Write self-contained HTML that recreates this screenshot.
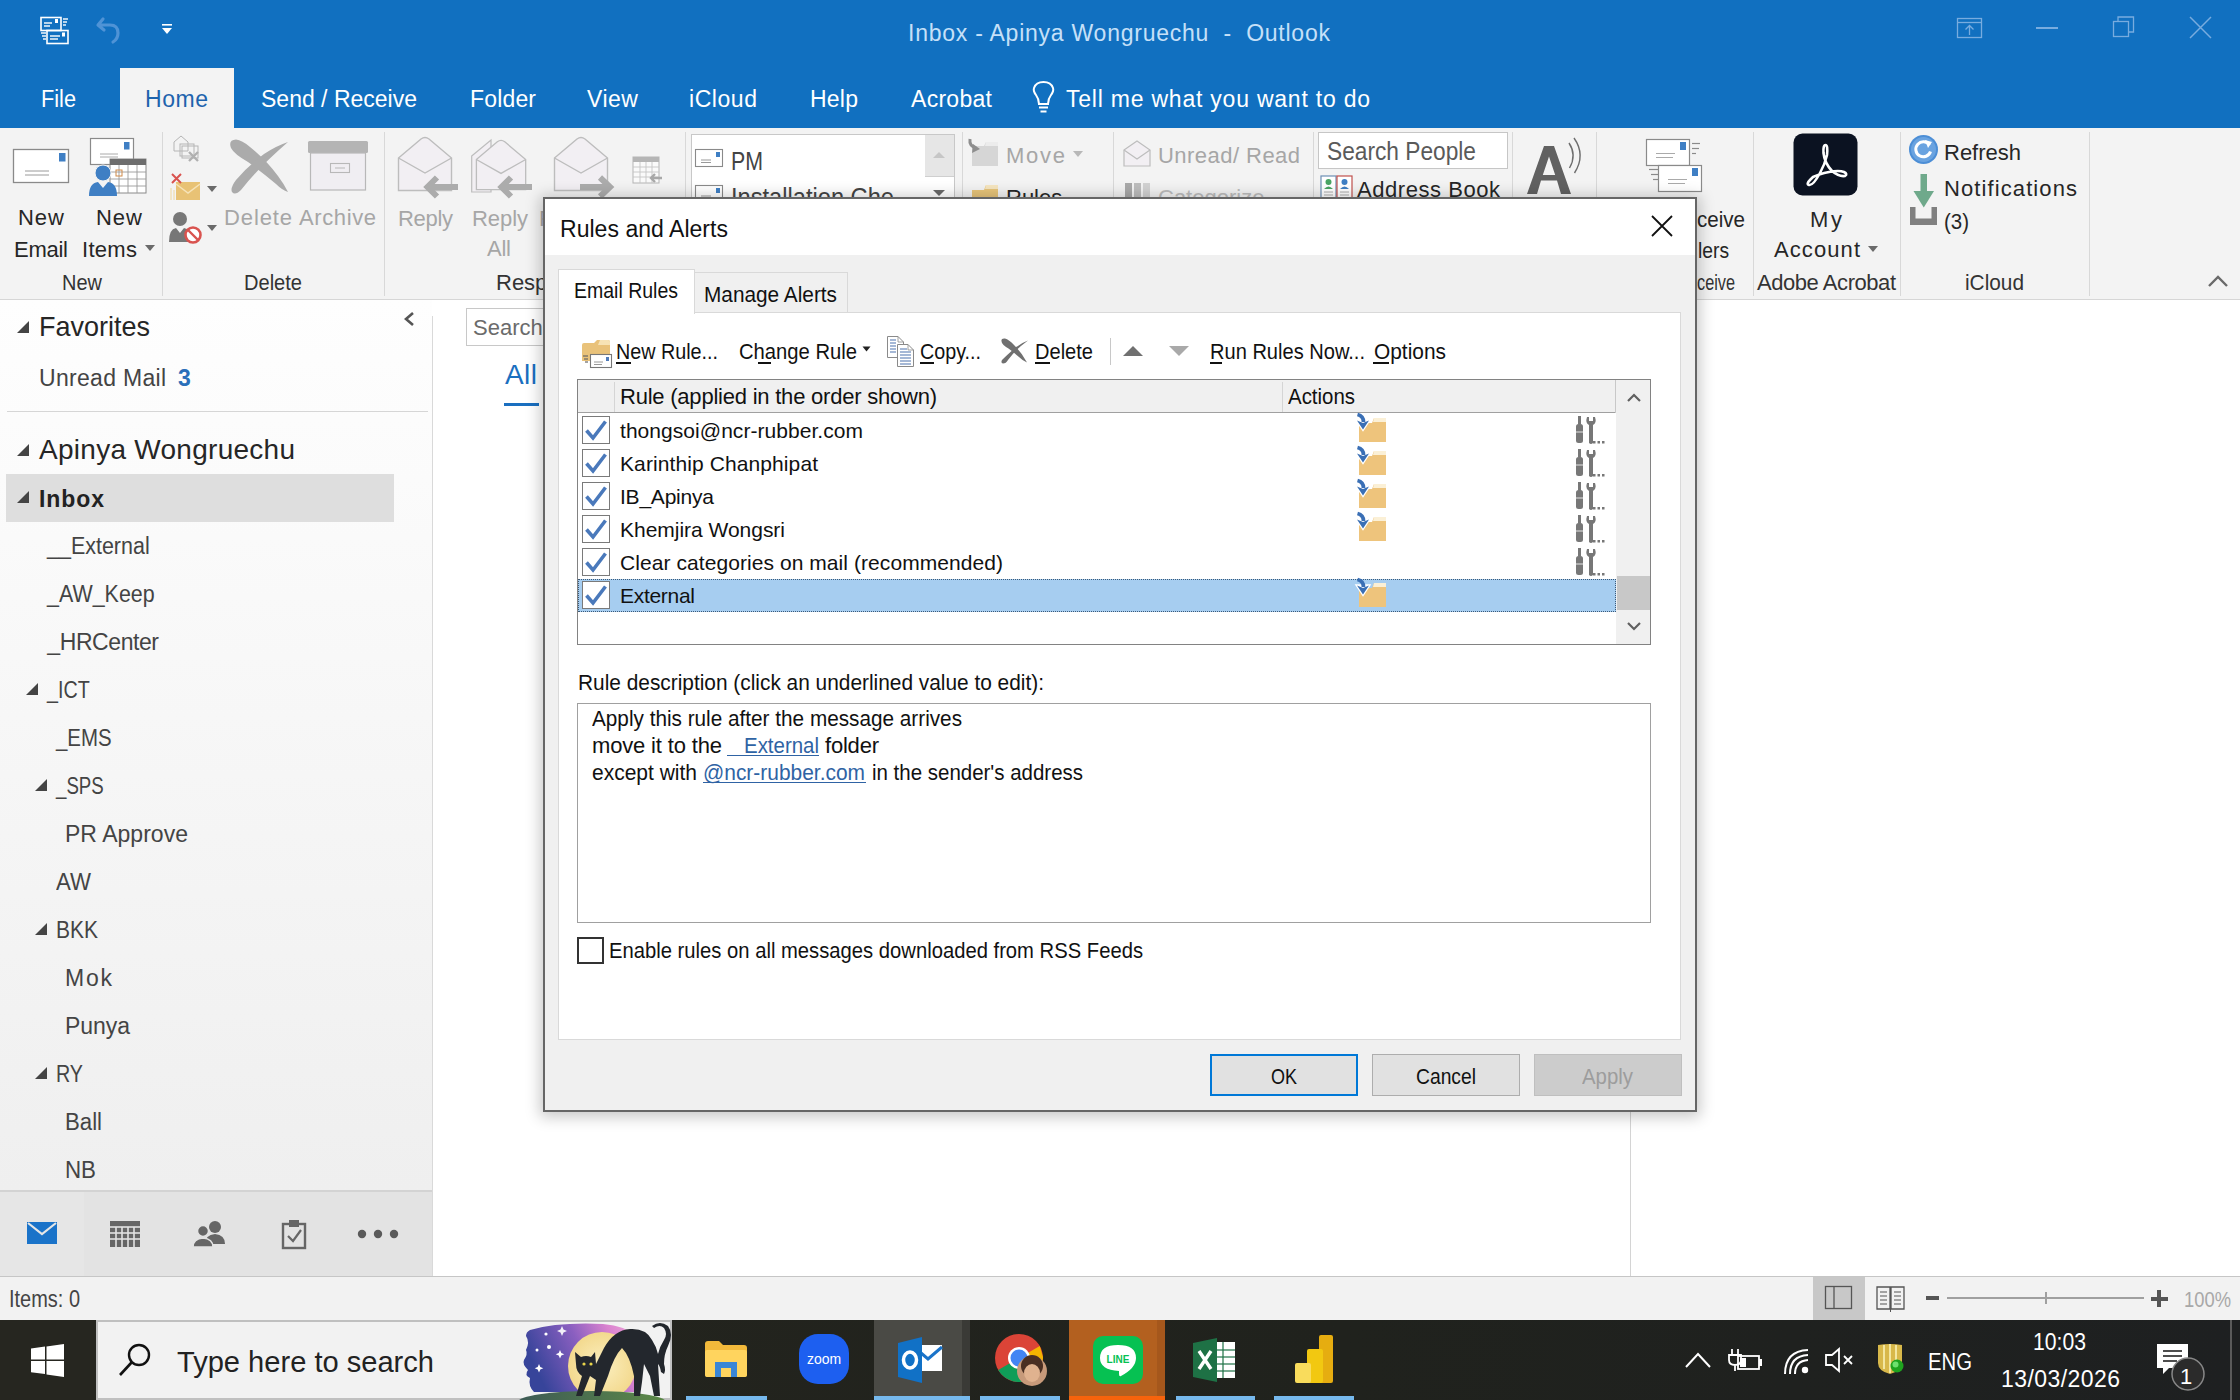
<!DOCTYPE html><html><head><meta charset="utf-8"><style>
html,body{margin:0;padding:0;width:2240px;height:1400px;overflow:hidden;background:#fff;}
body{position:relative;font-family:"Liberation Sans",sans-serif;}
.t{position:absolute;white-space:nowrap;line-height:1;}
.r{position:absolute;box-sizing:border-box;}
.s{position:absolute;overflow:visible;}
u{text-decoration:none;border-bottom:0;}
</style></head><body>
<div class="r" style="left:0px;top:0px;width:2240px;height:128px;background:#1170c0;"></div>
<div class="r" style="left:120px;top:68px;width:114px;height:60px;background:#f3f3f3;"></div>
<div class="r" style="left:0px;top:128px;width:2240px;height:171px;background:#f3f3f3;"></div>
<div class="r" style="left:0px;top:299px;width:2240px;height:1px;background:#d6d6d6;"></div>
<div class="r" style="left:0px;top:300px;width:432px;height:890px;background:linear-gradient(#fefefe,#efefef);"></div>
<div class="r" style="left:432px;top:316px;width:1px;height:960px;background:#d9d9d9;"></div>
<div class="r" style="left:0px;top:1190px;width:432px;height:2px;background:#d3d3d3;"></div>
<div class="r" style="left:0px;top:1192px;width:432px;height:84px;background:#e3e3e3;"></div>
<div class="r" style="left:0px;top:1192px;width:84px;height:84px;background:#e6e6e6;"></div>
<div class="r" style="left:0px;top:1276px;width:2240px;height:1px;background:#c6c6c6;"></div>
<div class="r" style="left:0px;top:1277px;width:2240px;height:43px;background:#f2f2f2;"></div>
<div class="t " style="left:908.00px;top:22.05px;font-size:23px;color:#c6e0f8;letter-spacing:0.759px;">Inbox - Apinya Wongruechu&nbsp; -&nbsp; Outlook</div>
<svg class="s" style="left:38px;top:15px;" width="34" height="32" viewBox="0 0 34 32"><g fill="none" stroke="#fff" stroke-width="1.6">
<rect x="3" y="2.5" width="20" height="13"/><rect x="9" y="15.5" width="21" height="13"/></g>
<g stroke="#fff" stroke-width="1.4"><line x1="6" y1="8" x2="14" y2="8"/><line x1="6" y1="11" x2="12" y2="11"/>
<line x1="12" y1="21" x2="22" y2="21"/><line x1="12" y1="24" x2="20" y2="24"/>
<line x1="25" y1="4" x2="30" y2="4"/><line x1="25" y1="7" x2="29" y2="7"/><line x1="25" y1="10" x2="28" y2="10"/>
<line x1="3" y1="18" x2="8" y2="18"/><line x1="4" y1="21" x2="8" y2="21"/><line x1="5" y1="24" x2="8" y2="24"/></g>
<rect x="17" y="4" width="3" height="4" fill="#fff"/><rect x="24" y="17.5" width="3" height="4" fill="#fff"/></svg>
<svg class="s" style="left:95px;top:15px;" width="30" height="30" viewBox="0 0 30 30"><path d="M8 4 L3 10 L9 15 M3.5 10 H15 Q23 10 23 18 Q23 24 18 27" fill="none" stroke="#4f93d6" stroke-width="3.2" stroke-linecap="round" stroke-linejoin="round"/></svg>
<svg class="s" style="left:160px;top:22px;" width="14" height="14" viewBox="0 0 14 14"><rect x="2" y="2" width="10" height="1.6" fill="#fff"/><path d="M2 6 H12 L7 12 Z" fill="#fff"/></svg>
<svg class="s" style="left:1954px;top:15px;" width="32" height="26" viewBox="0 0 32 26"><rect x="3.5" y="3.5" width="24" height="19" fill="none" stroke="#78acdf" stroke-width="1.3"/><line x1="3" y1="7.5" x2="28" y2="7.5" stroke="#78acdf" stroke-width="1.3"/>
<path d="M15.5 20 V11 M11.5 14.5 L15.5 10.5 L19.5 14.5" fill="none" stroke="#78acdf" stroke-width="1.3"/></svg>
<div class="r" style="left:2036px;top:27px;width:22px;height:2px;background:#78acdf;"></div>
<svg class="s" style="left:2112px;top:15px;" width="24" height="24" viewBox="0 0 24 24"><rect x="1.5" y="6.5" width="15" height="15" fill="none" stroke="#78acdf" stroke-width="1.3"/><path d="M6 6.5 V2 H21.5 V17 H17" fill="none" stroke="#78acdf" stroke-width="1.3"/></svg>
<svg class="s" style="left:2188px;top:16px;" width="26" height="24" viewBox="0 0 26 24"><path d="M2 1 L23 22 M23 1 L2 22" stroke="#78acdf" stroke-width="1.5"/></svg>
<div class="t " style="left:41.00px;top:88.05px;font-size:23px;color:#ffffff;transform:scaleX(0.9446);transform-origin:0 0;">File</div>
<div class="t " style="left:145.00px;top:88.05px;font-size:23px;color:#1e63ad;letter-spacing:0.545px;">Home</div>
<div class="t " style="left:261.00px;top:88.05px;font-size:23px;color:#ffffff;letter-spacing:0.001px;">Send / Receive</div>
<div class="t " style="left:470.00px;top:88.05px;font-size:23px;color:#ffffff;letter-spacing:0.159px;">Folder</div>
<div class="t " style="left:587.00px;top:88.05px;font-size:23px;color:#ffffff;letter-spacing:0.501px;">View</div>
<div class="t " style="left:689.00px;top:88.05px;font-size:23px;color:#ffffff;letter-spacing:0.559px;">iCloud</div>
<div class="t " style="left:810.00px;top:88.05px;font-size:23px;color:#ffffff;letter-spacing:0.230px;">Help</div>
<div class="t " style="left:911.00px;top:88.05px;font-size:23px;color:#ffffff;letter-spacing:0.290px;">Acrobat</div>
<svg class="s" style="left:1031px;top:80px;" width="28" height="36" viewBox="0 0 28 36"><path d="M8 24 Q8 19 5 15 Q2 11 3 8 Q5 2 12.5 2 Q20 2 22 8 Q23 11 20 15 Q17 19 17 24 Z" fill="none" stroke="#fff" stroke-width="2"/>
<line x1="8" y1="27.5" x2="17" y2="27.5" stroke="#fff" stroke-width="2"/><line x1="9.5" y1="31.5" x2="15.5" y2="31.5" stroke="#fff" stroke-width="2"/></svg>
<div class="t " style="left:1066.00px;top:88.05px;font-size:23px;color:#ffffff;letter-spacing:0.776px;">Tell me what you want to do</div>
<div class="r" style="left:162px;top:132px;width:1px;height:164px;background:#d8d8d8;"></div>
<div class="r" style="left:384px;top:132px;width:1px;height:164px;background:#d8d8d8;"></div>
<div class="r" style="left:685px;top:132px;width:1px;height:164px;background:#d8d8d8;"></div>
<div class="r" style="left:962px;top:132px;width:1px;height:164px;background:#d8d8d8;"></div>
<div class="r" style="left:1113px;top:132px;width:1px;height:164px;background:#d8d8d8;"></div>
<div class="r" style="left:1313px;top:132px;width:1px;height:164px;background:#d8d8d8;"></div>
<div class="r" style="left:1512px;top:132px;width:1px;height:164px;background:#d8d8d8;"></div>
<div class="r" style="left:1596px;top:132px;width:1px;height:164px;background:#d8d8d8;"></div>
<div class="r" style="left:1753px;top:132px;width:1px;height:164px;background:#d8d8d8;"></div>
<div class="r" style="left:1900px;top:132px;width:1px;height:164px;background:#d8d8d8;"></div>
<div class="r" style="left:2089px;top:132px;width:1px;height:164px;background:#d8d8d8;"></div>
<svg class="s" style="left:12px;top:147px;" width="60" height="38" viewBox="0 0 60 38"><rect x="1.5" y="2.5" width="55" height="33" fill="#fff" stroke="#8a8a8a" stroke-width="1.3"/>
<rect x="47" y="6" width="6.5" height="8.5" fill="#3f7fc4"/>
<line x1="13" y1="24" x2="37" y2="24" stroke="#9a9a9a" stroke-width="1"/><line x1="13" y1="28" x2="37" y2="28" stroke="#9a9a9a" stroke-width="1"/></svg>
<div class="t " style="left:18.00px;top:206.90px;font-size:22px;color:#262626;letter-spacing:0.967px;">New</div>
<div class="t " style="left:14.00px;top:238.90px;font-size:22px;color:#262626;letter-spacing:-0.255px;">Email</div>
<svg class="s" style="left:88px;top:136px;" width="62" height="62" viewBox="0 0 62 62"><rect x="2.5" y="2.5" width="43" height="26" fill="#fff" stroke="#8a8a8a" stroke-width="1.2"/>
<rect x="36" y="6" width="5.5" height="7.5" fill="#3f7fc4"/>
<line x1="12" y1="18" x2="30" y2="18" stroke="#aaa"/><line x1="12" y1="21" x2="30" y2="21" stroke="#aaa"/>
<rect x="22" y="23" width="36" height="34" fill="#fff" stroke="#8a8a8a" stroke-width="1"/>
<rect x="22" y="23" width="36" height="6" fill="#6d6d6d"/>
<g stroke="#9a9a9a" stroke-width="0.9"><line x1="22" y1="36" x2="58" y2="36"/><line x1="22" y1="43" x2="58" y2="43"/><line x1="22" y1="50" x2="58" y2="50"/>
<line x1="31" y1="29" x2="31" y2="57"/><line x1="40" y1="29" x2="40" y2="57"/><line x1="49" y1="29" x2="49" y2="57"/></g>
<rect x="28" y="34" width="6" height="6" fill="none" stroke="#d08b4a" stroke-width="1"/>
<circle cx="15" cy="37" r="8" fill="#3f7fc4" stroke="#f3f3f3" stroke-width="1"/>
<path d="M1 60 Q1 47 10 46 L15 52 L20 46 Q29 47 29 60 Z" fill="#3f7fc4"/></svg>
<div class="t " style="left:96.00px;top:206.90px;font-size:22px;color:#262626;letter-spacing:0.967px;">New</div>
<div class="t " style="left:82.00px;top:238.90px;font-size:22px;color:#262626;letter-spacing:0.303px;">Items</div>
<svg class="s" style="left:144px;top:244px;" width="12" height="8" viewBox="0 0 12 8"><path d="M1 1 H11 L6 7 Z" fill="#6a6a6a"/></svg>
<div class="t " style="left:62.00px;top:271.90px;font-size:22px;color:#333;transform:scaleX(0.9077);transform-origin:0 0;">New</div>
<svg class="s" style="left:172px;top:134px;" width="32" height="34" viewBox="0 0 32 34"><g fill="none" stroke="#b5b5b5" stroke-width="1"><path d="M2 8 L9 2 L16 8 V17 H2 Z"/><rect x="8" y="10" width="14" height="12"/><rect x="10" y="12" width="16" height="12"/></g>
<path d="M17 18 L26 27 M26 18 L17 27" stroke="#b0b0b0" stroke-width="2.4"/></svg>
<svg class="s" style="left:168px;top:172px;" width="36" height="32" viewBox="0 0 36 32"><rect x="8" y="10" width="24" height="18" fill="#e8c275"/><path d="M8 12 L20 21 L32 12" fill="none" stroke="#f6e3b8" stroke-width="1.5"/>
<path d="M4 2 L13 11 M13 2 L4 11" stroke="#d9534f" stroke-width="2"/><g stroke="#f0d79c" stroke-width="1"><line x1="3" y1="16" x2="3" y2="28"/><line x1="6" y1="18" x2="6" y2="28"/></g></svg>
<svg class="s" style="left:206px;top:185px;" width="12" height="8" viewBox="0 0 12 8"><path d="M1 1 H11 L6 7 Z" fill="#6a6a6a"/></svg>
<svg class="s" style="left:168px;top:210px;" width="36" height="36" viewBox="0 0 36 36"><circle cx="12" cy="9" r="7" fill="#777"/><path d="M1 32 Q1 19 8 18 L12 23 L16 18 Q22 19 23 26 V32 Z" fill="#777"/>
<circle cx="25" cy="25" r="7.5" fill="#fff" stroke="#d9534f" stroke-width="2.6"/><line x1="20" y1="20" x2="30" y2="30" stroke="#d9534f" stroke-width="2.4"/></svg>
<svg class="s" style="left:206px;top:224px;" width="12" height="8" viewBox="0 0 12 8"><path d="M1 1 H11 L6 7 Z" fill="#6a6a6a"/></svg>
<svg class="s" style="left:226px;top:138px;" width="64" height="56" viewBox="0 0 64 56"><path d="M5 10 Q2 2 10 1.5 Q16 2 24 9 Q40 22 52 38 Q58 46 62 54 Q56 52 50 46 Q36 34 22 24 Q8 16 5 10 Z" fill="#ababab"/>
<path d="M62 4 Q50 8 38 16 Q22 28 10 42 Q4 50 6 54 Q9 58 15 52 Q32 30 62 4 Z" fill="#ababab"/></svg>
<div class="t " style="left:224.00px;top:206.90px;font-size:22px;color:#a6a6a6;letter-spacing:0.880px;">Delete</div>
<svg class="s" style="left:306px;top:140px;" width="64" height="54" viewBox="0 0 64 54"><rect x="2" y="1" width="60" height="12" rx="1.5" fill="#b4b4b4"/><rect x="4.5" y="13" width="55" height="37" fill="#f0eef2" stroke="#b8b8b8" stroke-width="1.2"/>
<rect x="24.5" y="23.5" width="19" height="9" fill="none" stroke="#b8b8b8" stroke-width="1.1"/><line x1="29" y1="28" x2="39" y2="28" stroke="#b8b8b8"/></svg>
<div class="t " style="left:299.00px;top:206.90px;font-size:22px;color:#a6a6a6;letter-spacing:0.605px;">Archive</div>
<div class="t " style="left:244.00px;top:271.90px;font-size:22px;color:#333;transform:scaleX(0.9119);transform-origin:0 0;">Delete</div>
<svg class="s" style="left:397px;top:136px;" width="64" height="64" viewBox="0 0 64 64"><path d="M1.5 22 L24 3 Q28 0 32 3 L54.5 22 V54.5 H1.5 Z" fill="#f2eff3" stroke="#bdbdbd" stroke-width="1.4"/><path d="M1.5 22 L28 37 L54.5 22" fill="none" stroke="#bdbdbd" stroke-width="1.4"/><path d="M61 51 H31 M40 41.5 L30.5 51 L40 60.5" fill="none" stroke="#acacac" stroke-width="6"/></svg>
<svg class="s" style="left:471px;top:136px;" width="64" height="64" viewBox="0 0 64 64"><path d="M0.7 20 L20 4 V56 H0.7 Z" fill="#f2eff3" stroke="#bdbdbd" stroke-width="1.2"/><g transform="translate(4,3) scale(0.93)"><path d="M1.5 22 L24 3 Q28 0 32 3 L54.5 22 V54.5 H1.5 Z" fill="#f2eff3" stroke="#bdbdbd" stroke-width="1.4"/><path d="M1.5 22 L28 37 L54.5 22" fill="none" stroke="#bdbdbd" stroke-width="1.4"/></g><path d="M61 51 H31 M40 41.5 L30.5 51 L40 60.5" fill="none" stroke="#acacac" stroke-width="6"/></svg>
<svg class="s" style="left:553px;top:136px;" width="64" height="64" viewBox="0 0 64 64"><path d="M1.5 22 L24 3 Q28 0 32 3 L54.5 22 V54.5 H1.5 Z" fill="#f2eff3" stroke="#bdbdbd" stroke-width="1.4"/><path d="M1.5 22 L28 37 L54.5 22" fill="none" stroke="#bdbdbd" stroke-width="1.4"/><path d="M27 51 H56 M47 41.5 L57 51 L47 60.5" fill="none" stroke="#acacac" stroke-width="6"/></svg>
<div class="t " style="left:398.00px;top:207.90px;font-size:22px;color:#a6a6a6;letter-spacing:-0.313px;">Reply</div>
<div class="t " style="left:472.00px;top:207.90px;font-size:22px;color:#a6a6a6;letter-spacing:-0.063px;">Reply</div>
<div class="t " style="left:487.00px;top:237.90px;font-size:22px;color:#a6a6a6;letter-spacing:-0.221px;">All</div>
<div class="t " style="left:539.00px;top:207.90px;font-size:22px;color:#a6a6a6;">F</div>
<svg class="s" style="left:630px;top:154px;" width="34" height="34" viewBox="0 0 34 34"><rect x="3" y="3" width="26" height="26" fill="#fafafa" stroke="#b5b5b5"/><rect x="3" y="3" width="26" height="5" fill="#b5b5b5"/>
<g stroke="#c5c5c5" stroke-width="0.9"><line x1="3" y1="13" x2="29" y2="13"/><line x1="3" y1="18" x2="29" y2="18"/><line x1="3" y1="23" x2="29" y2="23"/><line x1="10" y1="8" x2="10" y2="29"/><line x1="16" y1="8" x2="16" y2="29"/><line x1="22" y1="8" x2="22" y2="29"/></g>
<path d="M32 24 H21 M25 20 L21 24 L25 28" fill="none" stroke="#a8a8a8" stroke-width="2.4"/></svg>
<div class="t " style="left:496.00px;top:271.90px;font-size:22px;color:#333;">Respo</div>
<div class="r" style="left:691px;top:134px;width:264px;height:70px;background:#fff;border:1px solid #c8c8c8;"></div>
<div class="r" style="left:925px;top:135px;width:29px;height:41px;background:#e6e6e6;"></div>
<div class="r" style="left:925px;top:176px;width:29px;height:1px;background:#cfcfcf;"></div>
<svg class="s" style="left:930px;top:150px;" width="18" height="10" viewBox="0 0 18 10"><path d="M3 8 L9 2 L15 8 Z" fill="#c6c6c6"/></svg>
<svg class="s" style="left:930px;top:188px;" width="18" height="10" viewBox="0 0 18 10"><path d="M3 2 L9 8 L15 2 Z" fill="#6a6a6a"/></svg>
<svg class="s" style="left:694px;top:148px;" width="32" height="20" viewBox="0 0 32 20"><rect x="1.5" y="1.5" width="27" height="17" fill="#fff" stroke="#8a8a8a" stroke-width="1.1"/><rect x="22" y="4" width="4" height="5" fill="#3f7fc4"/><line x1="7" y1="12" x2="17" y2="12" stroke="#999"/><line x1="7" y1="14.5" x2="17" y2="14.5" stroke="#999"/></svg>
<div class="t " style="left:731.00px;top:149.35px;font-size:25px;color:#444;transform:scaleX(0.8533);transform-origin:0 0;">PM</div>
<svg class="s" style="left:694px;top:184px;" width="32" height="20" viewBox="0 0 32 20"><rect x="1.5" y="1.5" width="27" height="17" fill="#fff" stroke="#8a8a8a" stroke-width="1.1"/><rect x="22" y="4" width="4" height="5" fill="#3f7fc4"/><line x1="7" y1="12" x2="17" y2="12" stroke="#999"/></svg>
<div class="t " style="left:731.00px;top:185.35px;font-size:25px;color:#444;transform:scaleX(0.9459);transform-origin:0 0;">Installation Che</div>
<svg class="s" style="left:966px;top:136px;" width="36" height="32" viewBox="0 0 36 32"><path d="M6 10 H18 L20 6 H32 V30 H6 Z" fill="#d6d6d6"/><path d="M20 6 H32 V10 H19 Z" fill="#ececec"/>
<path d="M4 3 Q3 10 10 12" fill="none" stroke="#8e8e8e" stroke-width="3"/><path d="M7 8 L14 13 L6 17 Z" fill="#8e8e8e"/></svg>
<div class="t " style="left:1006.00px;top:144.90px;font-size:22px;color:#a6a6a6;letter-spacing:1.737px;">Move</div>
<svg class="s" style="left:1072px;top:150px;" width="12" height="8" viewBox="0 0 12 8"><path d="M1 1 H11 L6 7 Z" fill="#b8b8b8"/></svg>
<svg class="s" style="left:966px;top:180px;" width="36" height="24" viewBox="0 0 36 24"><path d="M6 10 H18 L20 5 H32 V30 H6 Z" fill="#e8c57a"/><path d="M20 5 H32 V9 H19 Z" fill="#f6e6c0"/></svg>
<div class="t " style="left:1006.00px;top:186.90px;font-size:22px;color:#262626;">Rules</div>
<svg class="s" style="left:1070px;top:196px;" width="12" height="8" viewBox="0 0 12 8"><path d="M1 1 H11 L6 7 Z" fill="#555"/></svg>
<svg class="s" style="left:1122px;top:140px;" width="32" height="28" viewBox="0 0 32 28"><path d="M2 10 L15 1 L28 10 V26 H2 Z" fill="#f2eff3" stroke="#bdbdbd" stroke-width="1.2"/><path d="M2 10 L15 19 L28 10" fill="none" stroke="#bdbdbd" stroke-width="1.2"/></svg>
<div class="t " style="left:1158.00px;top:144.90px;font-size:22px;color:#a6a6a6;letter-spacing:0.457px;">Unread/ Read</div>
<svg class="s" style="left:1124px;top:182px;" width="28" height="20" viewBox="0 0 28 20"><rect x="1" y="1" width="7" height="18" fill="#a9a9a9"/><rect x="10" y="1" width="7" height="18" fill="#bdbdbd"/><rect x="19" y="1" width="7" height="18" fill="#d2d2d2"/></svg>
<div class="t " style="left:1158.00px;top:186.90px;font-size:22px;color:#bdbdbd;">Categorize</div>
<div class="r" style="left:1318px;top:132px;width:190px;height:37px;background:#fff;border:1px solid #c6c6c6;"></div>
<div class="t " style="left:1327.00px;top:139.35px;font-size:25px;color:#5a5a5a;transform:scaleX(0.9085);transform-origin:0 0;">Search People</div>
<svg class="s" style="left:1320px;top:174px;" width="34" height="26" viewBox="0 0 34 26"><rect x="1" y="2" width="15" height="22" fill="#fff" stroke="#6d8fb5" stroke-width="1.2"/><rect x="17" y="2" width="15" height="22" fill="#fff" stroke="#c0504d" stroke-width="1.2"/>
<circle cx="8.5" cy="8" r="3" fill="#4aa564"/><path d="M4 15 Q8.5 10 13 15 Z" fill="#4aa564"/><circle cx="24.5" cy="8" r="3" fill="#3f7fc4"/><path d="M20 15 Q24.5 10 29 15 Z" fill="#3f7fc4"/>
<g stroke="#999" stroke-width="0.8"><line x1="4" y1="18" x2="13" y2="18"/><line x1="4" y1="21" x2="13" y2="21"/><line x1="20" y1="18" x2="29" y2="18"/><line x1="20" y1="21" x2="29" y2="21"/></g></svg>
<div class="t " style="left:1357.00px;top:178.90px;font-size:22px;color:#262626;letter-spacing:0.544px;">Address Book</div>
<svg class="s" style="left:1524px;top:142px;" width="50" height="54" viewBox="0 0 50 54"><path d="M3 52 L20 4 H30 L47 52 H37 L33 38.5 H17 L13 52 Z M18.8 33 H31.2 L25 14.5 Z" fill="#616161" fill-rule="evenodd"/></svg>
<svg class="s" style="left:1566px;top:136px;" width="20" height="40" viewBox="0 0 20 40"><path d="M3 7 Q11 19 3.5 32" fill="none" stroke="#6d6d6d" stroke-width="1.4"/><path d="M8 2 Q20 19 8.5 37" fill="none" stroke="#6d6d6d" stroke-width="1.4"/></svg>
<svg class="s" style="left:1640px;top:136px;" width="68" height="60" viewBox="0 0 68 60"><rect x="6.5" y="3.5" width="43" height="26" fill="#fff" stroke="#8a8a8a" stroke-width="1.2"/><rect x="40" y="6" width="6" height="8" fill="#3f7fc4"/>
<line x1="16" y1="17.5" x2="35" y2="17.5" stroke="#aaa"/><line x1="16" y1="21.5" x2="33" y2="21.5" stroke="#aaa"/>
<g stroke="#8a8a8a" stroke-width="1.2"><line x1="52" y1="7.5" x2="60" y2="7.5"/><line x1="52" y1="12.5" x2="59" y2="12.5"/><line x1="52" y1="17.5" x2="56" y2="17.5"/>
<line x1="9" y1="33.5" x2="18" y2="33.5"/><line x1="11" y1="38.5" x2="18" y2="38.5"/><line x1="13" y1="43.5" x2="18" y2="43.5"/></g>
<rect x="18.5" y="29.5" width="43" height="26" fill="#fff" stroke="#8a8a8a" stroke-width="1.2"/><rect x="52" y="32" width="6" height="8" fill="#3f7fc4"/>
<line x1="28" y1="43.5" x2="47" y2="43.5" stroke="#aaa"/><line x1="28" y1="47.5" x2="45" y2="47.5" stroke="#aaa"/></svg>
<div class="t " style="left:1697.00px;top:208.90px;font-size:22px;color:#262626;transform:scaleX(0.9348);transform-origin:0 0;">ceive</div>
<div class="t " style="left:1698.00px;top:239.90px;font-size:22px;color:#262626;transform:scaleX(0.8747);transform-origin:0 0;">lers</div>
<div class="t " style="left:1697.00px;top:271.90px;font-size:22px;color:#333;transform:scaleX(0.7400);transform-origin:0 0;">ceive</div>
<svg class="s" style="left:1793px;top:133px;" width="66" height="63" viewBox="0 0 66 63"><rect x="0.5" y="0.5" width="64" height="62" rx="9" fill="#0b1221"/>
<path d="M17 47 Q13 51 16 52 Q20 53 27 40 Q32 31 34 22 Q35 12 32.5 12 Q30 12 30.5 20 Q31.5 30 39 38 Q46 44 52 43 Q55 41 51 39 Q46 37 36 39 Q26 41 20 44 Z" fill="none" stroke="#fff" stroke-width="2.6" stroke-linejoin="round"/></svg>
<div class="t " style="left:1810.00px;top:208.90px;font-size:22px;color:#262626;letter-spacing:2.674px;">My</div>
<div class="t " style="left:1774.00px;top:238.90px;font-size:22px;color:#262626;letter-spacing:1.086px;">Account</div>
<svg class="s" style="left:1867px;top:245px;" width="12" height="8" viewBox="0 0 12 8"><path d="M1 1 H11 L6 7 Z" fill="#6a6a6a"/></svg>
<div class="t " style="left:1757.00px;top:271.90px;font-size:22px;color:#333;letter-spacing:-0.445px;">Adobe Acrobat</div>
<svg class="s" style="left:1908px;top:134px;" width="32" height="32" viewBox="0 0 32 32"><circle cx="15.5" cy="15.5" r="14.5" fill="#4c8ed6"/><circle cx="15.5" cy="15.5" r="12.5" fill="#6aa3e0"/>
<path d="M21.5 11 A7.5 7.5 0 1 0 22.5 17.5" fill="none" stroke="#fff" stroke-width="3"/><path d="M17 6 L24 8 L20 14 Z" fill="#fff"/></svg>
<div class="t " style="left:1944.00px;top:141.90px;font-size:22px;color:#262626;letter-spacing:-0.004px;">Refresh</div>
<svg class="s" style="left:1908px;top:172px;" width="34" height="56" viewBox="0 0 34 56"><rect x="12.5" y="2" width="6.5" height="18" fill="#6fa98b"/><path d="M5.5 19 H26 L15.75 35.5 Z" fill="#6fa98b"/>
<rect x="2" y="35" width="5.5" height="18" fill="#808080"/><rect x="23.5" y="35" width="5.5" height="18" fill="#808080"/><rect x="2" y="46.5" width="27" height="6.5" fill="#808080"/></svg>
<div class="t " style="left:1944.00px;top:177.90px;font-size:22px;color:#262626;letter-spacing:1.097px;">Notifications</div>
<div class="t " style="left:1944.00px;top:210.90px;font-size:22px;color:#262626;transform:scaleX(0.9299);transform-origin:0 0;">(3)</div>
<div class="t " style="left:1965.00px;top:271.90px;font-size:22px;color:#333;transform:scaleX(0.9460);transform-origin:0 0;">iCloud</div>
<svg class="s" style="left:2206px;top:273px;" width="24" height="16" viewBox="0 0 24 16"><path d="M3 13 L12 4 L21 13" fill="none" stroke="#6a6a6a" stroke-width="2.4"/></svg>
<svg class="s" style="left:17px;top:321px;" width="12" height="12" viewBox="0 0 12 12"><path d="M12 0 V12 H0 Z" fill="#444"/></svg>
<div class="t " style="left:39.00px;top:312.80px;font-size:28px;color:#262626;transform:scaleX(0.9641);transform-origin:0 0;">Favorites</div>
<svg class="s" style="left:402px;top:311px;" width="14" height="16" viewBox="0 0 14 16"><path d="M11 2 L4 8 L11 14" fill="none" stroke="#555" stroke-width="2.6"/></svg>
<div class="t " style="left:39.00px;top:367.05px;font-size:23px;color:#444444;letter-spacing:0.301px;">Unread Mail</div>
<div class="t " style="left:178.00px;top:367.05px;font-size:23px;color:#2a6fba;font-weight:bold;">3</div>
<div class="r" style="left:7px;top:411px;width:421px;height:1px;background:#d6d6d6;"></div>
<svg class="s" style="left:17px;top:444px;" width="12" height="12" viewBox="0 0 12 12"><path d="M12 0 V12 H0 Z" fill="#444"/></svg>
<div class="t " style="left:39.00px;top:435.80px;font-size:28px;color:#262626;letter-spacing:0.273px;">Apinya Wongruechu</div>
<div class="r" style="left:6px;top:474px;width:388px;height:48px;background:#dedede;"></div>
<svg class="s" style="left:17px;top:491px;" width="12" height="12" viewBox="0 0 12 12"><path d="M12 0 V12 H0 Z" fill="#444"/></svg>
<div class="t " style="left:39.00px;top:488.05px;font-size:23px;color:#222;letter-spacing:0.915px;font-weight:bold;">Inbox</div>
<div class="t " style="left:47.34px;top:535.05px;font-size:23px;color:#444444;transform:scaleX(0.9336);transform-origin:0 0;">__External</div>
<div class="t " style="left:47.34px;top:583.05px;font-size:23px;color:#444444;transform:scaleX(0.9320);transform-origin:0 0;">_AW_Keep</div>
<div class="t " style="left:47.37px;top:631.05px;font-size:23px;color:#444444;letter-spacing:-0.427px;">_HRCenter</div>
<div class="t " style="left:47.32px;top:679.05px;font-size:23px;color:#444444;transform:scaleX(0.8564);transform-origin:0 0;">_ICT</div>
<svg class="s" style="left:26px;top:683px;" width="12" height="12" viewBox="0 0 12 12"><path d="M12 0 V12 H0 Z" fill="#444"/></svg>
<div class="t " style="left:56.33px;top:727.05px;font-size:23px;color:#444444;transform:scaleX(0.8889);transform-origin:0 0;">_EMS</div>
<div class="t " style="left:56.30px;top:775.05px;font-size:23px;color:#444444;transform:scaleX(0.8111);transform-origin:0 0;">_SPS</div>
<svg class="s" style="left:35px;top:779px;" width="12" height="12" viewBox="0 0 12 12"><path d="M12 0 V12 H0 Z" fill="#444"/></svg>
<div class="t " style="left:65.00px;top:823.05px;font-size:23px;color:#444444;letter-spacing:0.030px;">PR Approve</div>
<div class="t " style="left:56.00px;top:871.05px;font-size:23px;color:#444444;transform:scaleX(0.9668);transform-origin:0 0;">AW</div>
<div class="t " style="left:56.00px;top:919.05px;font-size:23px;color:#444444;transform:scaleX(0.9126);transform-origin:0 0;">BKK</div>
<svg class="s" style="left:35px;top:923px;" width="12" height="12" viewBox="0 0 12 12"><path d="M12 0 V12 H0 Z" fill="#444"/></svg>
<div class="t " style="left:65.00px;top:967.05px;font-size:23px;color:#444444;letter-spacing:1.753px;">Mok</div>
<div class="t " style="left:65.00px;top:1015.05px;font-size:23px;color:#444444;letter-spacing:-0.057px;">Punya</div>
<div class="t " style="left:56.00px;top:1063.05px;font-size:23px;color:#444444;transform:scaleX(0.8562);transform-origin:0 0;">RY</div>
<svg class="s" style="left:35px;top:1067px;" width="12" height="12" viewBox="0 0 12 12"><path d="M12 0 V12 H0 Z" fill="#444"/></svg>
<div class="t " style="left:65.00px;top:1111.05px;font-size:23px;color:#444444;transform:scaleX(0.9644);transform-origin:0 0;">Ball</div>
<div class="t " style="left:65.00px;top:1159.05px;font-size:23px;color:#444444;transform:scaleX(0.9704);transform-origin:0 0;">NB</div>
<svg class="s" style="left:27px;top:1221px;" width="30" height="24" viewBox="0 0 30 24"><rect x="0" y="1" width="30" height="22" fill="#1a73c9"/><path d="M1 2 L15 13 L29 2" fill="none" stroke="#e6e6e6" stroke-width="2.2"/></svg>
<svg class="s" style="left:109px;top:1220px;" width="32" height="28" viewBox="0 0 32 28"><rect x="1" y="1" width="30" height="26" fill="#666"/>
<g stroke="#e3e3e3" stroke-width="1.6"><line x1="1" y1="7" x2="31" y2="7"/><line x1="1" y1="13" x2="31" y2="13"/><line x1="1" y1="19" x2="31" y2="19"/>
<line x1="7" y1="7" x2="7" y2="27"/><line x1="13" y1="7" x2="13" y2="27"/><line x1="19" y1="7" x2="19" y2="27"/><line x1="25" y1="7" x2="25" y2="27"/></g></svg>
<svg class="s" style="left:193px;top:1220px;" width="34" height="28" viewBox="0 0 34 28"><circle cx="22" cy="7" r="6" fill="#666"/><path d="M12 24 Q12 15 22 14 Q32 15 32 24 Z" fill="#666"/>
<circle cx="10" cy="11" r="5.5" fill="#666" stroke="#e3e3e3" stroke-width="1.5"/><path d="M0 27 Q0 19 10 18 Q20 19 20 27 Z" fill="#666" stroke="#e3e3e3" stroke-width="1.5"/></svg>
<svg class="s" style="left:281px;top:1219px;" width="26" height="30" viewBox="0 0 26 30"><rect x="2" y="5" width="22" height="24" fill="none" stroke="#666" stroke-width="2.4"/><rect x="8" y="1" width="10" height="7" fill="#666"/>
<path d="M7 17 L12 22 L20 11" fill="none" stroke="#666" stroke-width="2.2"/></svg>
<svg class="s" style="left:357px;top:1229px;" width="10" height="10" viewBox="0 0 10 10"><circle cx="5" cy="5" r="4.2" fill="#5a5a5a"/></svg>
<svg class="s" style="left:373px;top:1229px;" width="10" height="10" viewBox="0 0 10 10"><circle cx="5" cy="5" r="4.2" fill="#5a5a5a"/></svg>
<svg class="s" style="left:389px;top:1229px;" width="10" height="10" viewBox="0 0 10 10"><circle cx="5" cy="5" r="4.2" fill="#5a5a5a"/></svg>
<div class="r" style="left:466px;top:308px;width:100px;height:38px;background:#fff;border:1px solid #c8c8c8;"></div>
<div class="t " style="left:473.00px;top:316.90px;font-size:22px;color:#6b6b6b;">Search C</div>
<div class="t " style="left:505.00px;top:360.80px;font-size:28px;color:#1a6fc0;letter-spacing:0.446px;">All</div>
<div class="r" style="left:504px;top:403px;width:35px;height:3px;background:#1a6fc0;"></div>
<div class="r" style="left:1630px;top:1100px;width:1px;height:176px;background:#d4d4d4;"></div>
<div class="t " style="left:9.00px;top:1288.05px;font-size:23px;color:#444;transform:scaleX(0.8679);transform-origin:0 0;">Items: 0</div>
<div class="r" style="left:1813px;top:1277px;width:52px;height:43px;background:#c8c8c8;"></div>
<svg class="s" style="left:1824px;top:1285px;" width="30" height="26" viewBox="0 0 30 26"><rect x="1.5" y="1.5" width="26" height="22" fill="none" stroke="#555" stroke-width="1.3"/><line x1="10" y1="1.5" x2="10" y2="23.5" stroke="#555" stroke-width="1.3"/></svg>
<svg class="s" style="left:1876px;top:1285px;" width="30" height="28" viewBox="0 0 30 28"><path d="M1 2 H14 V24 H1 Z M15 2 H28 V24 H15 Z" fill="none" stroke="#555" stroke-width="1.3"/>
<g stroke="#555" stroke-width="1"><line x1="4" y1="7" x2="11" y2="7"/><line x1="4" y1="11" x2="11" y2="11"/><line x1="4" y1="15" x2="11" y2="15"/><line x1="4" y1="19" x2="11" y2="19"/>
<line x1="18" y1="7" x2="25" y2="7"/><line x1="18" y1="11" x2="25" y2="11"/><line x1="18" y1="15" x2="25" y2="15"/><line x1="18" y1="19" x2="25" y2="19"/><line x1="14.5" y1="24" x2="14.5" y2="27"/></g></svg>
<div class="r" style="left:1926px;top:1296px;width:13px;height:4px;background:#555;"></div>
<div class="r" style="left:1947px;top:1297px;width:197px;height:2px;background:#a0a0a0;"></div>
<div class="r" style="left:2045px;top:1292px;width:2px;height:12px;background:#a0a0a0;"></div>
<div class="r" style="left:2151px;top:1297px;width:17px;height:4px;background:#555;"></div>
<div class="r" style="left:2157px;top:1290px;width:4px;height:17px;background:#555;"></div>
<div class="t " style="left:2184.00px;top:1288.90px;font-size:22px;color:#a8a8a8;transform:scaleX(0.8352);transform-origin:0 0;">100%</div>
<div class="r" style="left:0px;top:1320px;width:2240px;height:80px;background:linear-gradient(90deg,#25251e,#20221d 60%,#1e2021);"></div>
<div class="r" style="left:0px;top:1320px;width:96px;height:80px;background:#262620;"></div>
<svg class="s" style="left:31px;top:1344px;" width="34" height="33" viewBox="0 0 34 33"><path d="M0 4.5 L14 2.6 V15.5 H0 Z M15.5 2.4 L33 0 V15.5 H15.5 Z M0 17 H14 V30 L0 28.2 Z M15.5 17 H33 V33 L15.5 30.4 Z" fill="#fff"/></svg>
<div class="r" style="left:96px;top:1320px;width:576px;height:80px;background:#f2f2f2;border:2px solid #c0c0c0;"></div>
<svg class="s" style="left:118px;top:1342px;" width="36" height="36" viewBox="0 0 36 36"><circle cx="21" cy="13" r="10" fill="none" stroke="#111" stroke-width="2.4"/><line x1="14" y1="20" x2="2" y2="33" stroke="#111" stroke-width="2.6"/></svg>
<div class="t " style="left:177.00px;top:1347.10px;font-size:30px;color:#222;transform:scaleX(0.9693);transform-origin:0 0;">Type here to search</div>
<svg class="s" style="left:518px;top:1320px;" width="152" height="80" viewBox="0 0 152 80"><defs><linearGradient id="sky" x1="0" y1="0.3" x2="1" y2="0"><stop offset="0" stop-color="#37449a"/><stop offset="0.45" stop-color="#8a5fc0"/><stop offset="0.75" stop-color="#d982cf"/><stop offset="1" stop-color="#f0a8d8"/></linearGradient>
<radialGradient id="moon" cx="0.5" cy="0.5" r="0.5"><stop offset="0" stop-color="#fbefc0"/><stop offset="1" stop-color="#f3d98e"/></radialGradient>
<linearGradient id="grass" x1="0" y1="0" x2="1" y2="0"><stop offset="0" stop-color="#3d5a55"/><stop offset="1" stop-color="#5d8a48"/></linearGradient></defs>
<path d="M12 10 Q40 2 85 4 Q108 6 118 16 L118 72 H16 Q10 66 12 58 Q6 55 10 50 Q4 44 6 40 Q10 34 8 30 Q12 22 8 16 Q8 12 12 10 Z" fill="url(#sky)"/>
<circle cx="84" cy="46" r="34" fill="url(#moon)"/>
<ellipse cx="74" cy="82" rx="74" ry="11" fill="url(#grass)"/>
<path d="M58 76 L64 56 Q58 52 58 44 L57 32 L63 37 Q68 35 73 37 L77 32 L78 44 Q82 36 86 28 Q96 10 112 9 Q128 8 134 20 Q138 26 140 34 Q142 26 146 20 Q150 14 146 8 Q142 4 136 8 L134 6 Q142 0 150 6 Q156 14 150 26 Q146 34 146 44 Q148 50 146 54 L143 52 Q142 46 140 44 L142 76 L136 76 L132 56 Q128 48 126 44 L124 62 L122 76 L116 76 L116 56 Q112 36 104 28 Q96 36 90 56 L82 76 L76 76 L78 60 L72 56 L64 76 Z" fill="#23272d"/>
<circle cx="66" cy="44" r="1.6" fill="#e8d44a"/><circle cx="73" cy="44" r="1.6" fill="#e8d44a"/>
<g fill="#fff"><path d="M44 6 l1.5 3.5 3.5 1.5 -3.5 1.5 -1.5 3.5 -1.5 -3.5 -3.5 -1.5 3.5 -1.5z" opacity="0.9"/><path d="M42 30 l1.3 3 3 1.3 -3 1.3 -1.3 3 -1.3 -3 -3 -1.3 3 -1.3z"/><path d="M21 44 l1.3 3 3 1.3 -3 1.3 -1.3 3 -1.3 -3 -3 -1.3 3 -1.3z"/>
<circle cx="28" cy="14" r="1.6"/><circle cx="31" cy="27" r="2"/><circle cx="19" cy="30" r="1.5"/></g></svg>
<div class="r" style="left:874px;top:1320px;width:88px;height:80px;background:#4a4a45;"></div>
<div class="r" style="left:962px;top:1320px;width:8px;height:80px;background:#3a3a36;"></div>
<div class="r" style="left:1069px;top:1320px;width:96px;height:80px;background:#b3601f;"></div>
<div class="r" style="left:1157px;top:1320px;width:8px;height:80px;background:#a5571c;"></div>
<div class="r" style="left:686px;top:1396px;width:81px;height:4px;background:#76b9ed;"></div>
<div class="r" style="left:874px;top:1396px;width:96px;height:4px;background:#76b9ed;"></div>
<div class="r" style="left:980px;top:1396px;width:80px;height:4px;background:#76b9ed;"></div>
<div class="r" style="left:1069px;top:1396px;width:96px;height:4px;background:#f7630c;"></div>
<div class="r" style="left:1176px;top:1396px;width:79px;height:4px;background:#76b9ed;"></div>
<div class="r" style="left:1274px;top:1396px;width:80px;height:4px;background:#76b9ed;"></div>
<svg class="s" style="left:703px;top:1340px;" width="46" height="40" viewBox="0 0 46 40"><path d="M2 4 Q2 1 5 1 H16 L20 5 H41 Q44 5 44 8 V34 Q44 37 41 37 H5 Q2 37 2 34 Z" fill="#f2b93b"/>
<rect x="2" y="10" width="42" height="27" rx="2" fill="#ffd45e"/><path d="M12 37 V22 H34 V37 H28 V28 H18 V37 Z" fill="#3a86d6"/></svg>
<svg class="s" style="left:799px;top:1334px;" width="50" height="50" viewBox="0 0 50 50"><rect x="0" y="0" width="50" height="50" rx="19" fill="#1d5ff0"/><text x="25" y="30" font-family="Liberation Sans" font-size="14" fill="#fff" text-anchor="middle">zoom</text></svg>
<svg class="s" style="left:898px;top:1337px;" width="46" height="46" viewBox="0 0 46 46"><rect x="16" y="8" width="28" height="26" fill="#fff"/><path d="M16 10 L30 22 L44 10" fill="none" stroke="#1a73c9" stroke-width="3"/>
<path d="M0 6 L24 0 V46 L0 40 Z" fill="#1171c6"/><ellipse cx="12" cy="23" rx="6.5" ry="8" fill="none" stroke="#fff" stroke-width="3.5"/></svg>
<svg class="s" style="left:994px;top:1333px;" width="52" height="52" viewBox="0 0 52 52"><circle cx="25" cy="25" r="24" fill="#db4437"/><path d="M25 25 L4.2 37 A24 24 0 0 0 37 45.8 Z" fill="#0f9d58"/><path d="M25 25 L37 45.8 A24 24 0 0 0 49 25 V24 L45.8 13 Z" fill="#f4b400"/>
<circle cx="25" cy="25" r="11" fill="#fff"/><circle cx="25" cy="25" r="8.5" fill="#4285f4"/>
<circle cx="38" cy="38" r="15" fill="#c79a7a"/><circle cx="38" cy="33" r="11" fill="#4a2f22"/><ellipse cx="38" cy="40" rx="8" ry="9" fill="#e0b28f"/></svg>
<svg class="s" style="left:1093px;top:1336px;" width="50" height="48" viewBox="0 0 50 48"><rect x="0" y="0" width="50" height="48" rx="10" fill="#06c152"/><path d="M25 9 Q43 9 43 22 Q43 32 28 40 Q26 41 26 38 V35 Q7 34 7 22 Q7 9 25 9 Z" fill="#fff"/>
<text x="25" y="27" font-family="Liberation Sans" font-size="10" font-weight="bold" fill="#06c152" text-anchor="middle">LINE</text></svg>
<svg class="s" style="left:1193px;top:1338px;" width="44" height="44" viewBox="0 0 44 44"><rect x="18" y="4" width="24" height="36" fill="#fff"/><g stroke="#1e7145" stroke-width="1.2"><line x1="18" y1="12" x2="42" y2="12"/><line x1="18" y1="19" x2="42" y2="19"/><line x1="18" y1="26" x2="42" y2="26"/><line x1="18" y1="33" x2="42" y2="33"/><line x1="30" y1="4" x2="30" y2="40"/></g>
<path d="M0 5 L24 0 V44 L0 39 Z" fill="#1e7145"/><path d="M6 13 L18 31 M18 13 L6 31" stroke="#fff" stroke-width="3.4"/></svg>
<svg class="s" style="left:1295px;top:1335px;" width="40" height="50" viewBox="0 0 40 50"><rect x="24" y="0" width="14" height="48" rx="2" fill="#e6ad10"/><rect x="12" y="14" width="16" height="34" rx="2" fill="#f2c811"/><rect x="0" y="28" width="16" height="20" rx="2" fill="#f9dc5c"/></svg>
<svg class="s" style="left:1684px;top:1351px;" width="28" height="18" viewBox="0 0 28 18"><path d="M2 16 L14 3 L26 16" fill="none" stroke="#fff" stroke-width="2"/></svg>
<svg class="s" style="left:1728px;top:1347px;" width="36" height="26" viewBox="0 0 36 26"><path d="M4 2 V8 M10 2 V8 M1 8 H13 V13 Q13 18 7 18 Q1 18 1 13 Z M7 18 V24" fill="none" stroke="#fff" stroke-width="1.8"/>
<rect x="10" y="9" width="21" height="13" fill="none" stroke="#fff" stroke-width="1.8"/><rect x="31" y="12" width="3" height="7" fill="#fff"/><rect x="12" y="11" width="6" height="9" fill="#fff"/></svg>
<svg class="s" style="left:1783px;top:1348px;" width="28" height="28" viewBox="0 0 28 28"><path d="M2 26 Q2 3 25 2 M7 26 Q7 8 25 7 M12 26 Q12 13 25 12" fill="none" stroke="#fff" stroke-width="2"/><circle cx="22" cy="22" r="3.2" fill="#fff"/></svg>
<svg class="s" style="left:1824px;top:1347px;" width="32" height="26" viewBox="0 0 32 26"><path d="M2 8 H8 L15 2 V24 L8 18 H2 Z" fill="none" stroke="#fff" stroke-width="1.8"/><path d="M20 9 L28 17 M28 9 L20 17" stroke="#fff" stroke-width="1.8"/></svg>
<svg class="s" style="left:1876px;top:1343px;" width="30" height="32" viewBox="0 0 30 32"><path d="M2 2 Q14 0 26 2 V20 Q26 28 14 31 Q2 28 2 20 Z" fill="#d8b84a"/><path d="M8 2 V26 M14 1 V30 M20 2 V26" stroke="#f3e6a0" stroke-width="2"/>
<circle cx="21" cy="23" r="6.5" fill="#1fa31f"/><circle cx="19.5" cy="21.5" r="3" fill="#6ee06e"/></svg>
<div class="t " style="left:1928.00px;top:1351.05px;font-size:23px;color:#fff;transform:scaleX(0.8828);transform-origin:0 0;">ENG</div>
<div class="t " style="left:2033.00px;top:1331.05px;font-size:23px;color:#fff;transform:scaleX(0.9210);transform-origin:0 0;">10:03</div>
<div class="t " style="left:2001.00px;top:1368.05px;font-size:23px;color:#fff;letter-spacing:0.432px;">13/03/2026</div>
<svg class="s" style="left:2155px;top:1342px;" width="52" height="52" viewBox="0 0 52 52"><path d="M2 2 H33 V26 H14 L8 32 V26 H2 Z" fill="#fff"/><g stroke="#222" stroke-width="1.6"><line x1="8" y1="9" x2="27" y2="9"/><line x1="8" y1="14" x2="27" y2="14"/><line x1="8" y1="19" x2="22" y2="19"/></g>
<circle cx="33" cy="32" r="16" fill="#2b2b2b" stroke="#888" stroke-width="1.5"/></svg>
<div class="t " style="left:2180.00px;top:1365.90px;font-size:22px;color:#fff;">1</div>
<div class="r" style="left:2230px;top:1320px;width:2px;height:80px;background:#5a5a5a;"></div>
<div class="r" style="left:543px;top:197px;width:1154px;height:915px;background:#f0f0f0;border:2px solid #666;box-shadow:0 2px 14px 3px rgba(0,0,0,0.22);"></div>
<div class="r" style="left:545px;top:199px;width:1150px;height:56px;background:#fff;"></div>
<div class="t " style="left:560.00px;top:218.05px;font-size:23px;color:#111111;letter-spacing:0.034px;">Rules and Alerts</div>
<svg class="s" style="left:1650px;top:214px;" width="24" height="24" viewBox="0 0 24 24"><path d="M2 2 L22 22 M22 2 L2 22" stroke="#111" stroke-width="1.8"/></svg>
<div class="r" style="left:694px;top:272px;width:154px;height:41px;background:#f0f0f0;border:1px solid #d9d9d9;border-bottom:none;"></div>
<div class="r" style="left:558px;top:312px;width:1123px;height:728px;background:#fff;border:1px solid #d9d9d9;"></div>
<div class="r" style="left:558px;top:269px;width:137px;height:45px;background:#fff;border:1px solid #d9d9d9;border-bottom:none;"></div>
<div class="t " style="left:574.00px;top:279.90px;font-size:22px;color:#111111;transform:scaleX(0.8861);transform-origin:0 0;">Email Rules</div>
<div class="t " style="left:704.00px;top:283.90px;font-size:22px;color:#111111;transform:scaleX(0.9456);transform-origin:0 0;">Manage Alerts</div>
<svg class="s" style="left:580px;top:337px;" width="34" height="32" viewBox="0 0 34 32"><path d="M2 8 Q2 6 4 6 H14 L17 3 H28 Q30 3 30 5 V24 H2 Z" fill="#e9c27a"/><path d="M20 3 H28 Q30 3 30 5 V8 H18 Z" fill="#f7e3b5"/>
<rect x="10.5" y="17.5" width="21" height="13" fill="#fff" stroke="#777" stroke-width="1.1"/><rect x="26" y="20" width="3" height="4" fill="#4f7ab8"/>
<line x1="14" y1="25" x2="23" y2="25" stroke="#999"/><line x1="14" y1="27.5" x2="22" y2="27.5" stroke="#999"/>
<g stroke="#666" stroke-width="1.2"><line x1="3" y1="19" x2="8" y2="19"/><line x1="4" y1="22" x2="8" y2="22"/><line x1="5" y1="25" x2="8" y2="25"/></g></svg>
<div class="t " style="left:616.00px;top:340.90px;font-size:22px;color:#111111;transform:scaleX(0.8971);transform-origin:0 0;">New Rule...</div>
<div class="r" style="left:616px;top:362px;width:15px;height:2px;background:#111111;"></div>
<div class="t " style="left:739.00px;top:340.90px;font-size:22px;color:#111111;transform:scaleX(0.9189);transform-origin:0 0;">Change Rule</div>
<div class="r" style="left:758px;top:362px;width:13px;height:2px;background:#111111;"></div>
<svg class="s" style="left:862px;top:346px;" width="9" height="6" viewBox="0 0 9 6"><path d="M0.5 0.5 H8.5 L4.5 5.5 Z" fill="#222"/></svg>
<svg class="s" style="left:885px;top:335px;" width="32" height="33" viewBox="0 0 32 33"><path d="M2.5 1.5 H13 L18.5 7 V22.5 H2.5 Z" fill="#fff" stroke="#8a8a8a" stroke-width="1"/><path d="M13 1.5 V7 H18.5" fill="none" stroke="#8a8a8a" stroke-width="0.8"/>
<g stroke="#5b7fb5" stroke-width="1.1"><line x1="5" y1="5" x2="11" y2="5"/><line x1="5" y1="8" x2="11" y2="8"/><line x1="5" y1="11" x2="11" y2="11"/><line x1="5" y1="14" x2="11" y2="14"/><line x1="5" y1="17" x2="11" y2="17"/></g>
<path d="M12.5 9.5 H23 L28.5 15 V31.5 H12.5 Z" fill="#fff" stroke="#8a8a8a" stroke-width="1"/><path d="M23 9.5 V15 H28.5" fill="none" stroke="#8a8a8a" stroke-width="0.8"/>
<g stroke="#5b7fb5" stroke-width="1.1"><line x1="15" y1="14" x2="22" y2="14"/><line x1="15" y1="17" x2="26" y2="17"/><line x1="15" y1="20" x2="26" y2="20"/><line x1="15" y1="23" x2="26" y2="23"/><line x1="15" y1="26" x2="26" y2="26"/><line x1="15" y1="29" x2="26" y2="29"/></g></svg>
<div class="t " style="left:920.00px;top:340.90px;font-size:22px;color:#111111;transform:scaleX(0.8962);transform-origin:0 0;">Copy...</div>
<div class="r" style="left:920px;top:362px;width:14px;height:2px;background:#111111;"></div>
<svg class="s" style="left:999px;top:337px;" width="32" height="28" viewBox="0 0 32 28"><path d="M3 6 Q1 1 6 1.5 Q10 2.5 15 8 Q23 16 28 25.5 Q24 24 20 20 Q12 13 7 10 Q4 8 3 6 Z" fill="#707070"/>
<path d="M29 3.5 Q22 6 16 11 Q8 18 3 23 Q1.5 26 4 26.5 Q7 26.5 9 23 Q16 13 29 3.5 Z" fill="#707070"/></svg>
<div class="t " style="left:1035.00px;top:340.90px;font-size:22px;color:#111111;transform:scaleX(0.9119);transform-origin:0 0;">Delete</div>
<div class="r" style="left:1035px;top:362px;width:15px;height:2px;background:#111111;"></div>
<div class="r" style="left:1110px;top:338px;width:1px;height:27px;background:#c8c8c8;"></div>
<svg class="s" style="left:1122px;top:344px;" width="22" height="14" viewBox="0 0 22 14"><path d="M1 12 L11 2 L21 12 Z" fill="#707070"/></svg>
<svg class="s" style="left:1168px;top:344px;" width="22" height="14" viewBox="0 0 22 14"><path d="M1 2 L11 12 L21 2 Z" fill="#a9a9a9"/></svg>
<div class="t " style="left:1210.00px;top:340.90px;font-size:22px;color:#111111;transform:scaleX(0.9119);transform-origin:0 0;">Run Rules Now...</div>
<div class="r" style="left:1210px;top:362px;width:12px;height:2px;background:#111111;"></div>
<div class="t " style="left:1374.00px;top:340.90px;font-size:22px;color:#111111;transform:scaleX(0.9497);transform-origin:0 0;">Options</div>
<div class="r" style="left:1373px;top:362px;width:16px;height:2px;background:#111111;"></div>
<div class="r" style="left:577px;top:379px;width:1074px;height:266px;background:#fff;border:1px solid #828282;"></div>
<div class="r" style="left:578px;top:380px;width:1038px;height:33px;background:#f0f0f0;"></div>
<div class="r" style="left:578px;top:412px;width:1038px;height:1px;background:#a0a0a0;"></div>
<div class="r" style="left:614px;top:382px;width:1px;height:30px;background:#d5d5d5;"></div>
<div class="r" style="left:1282px;top:382px;width:1px;height:30px;background:#d5d5d5;"></div>
<div class="r" style="left:1615px;top:380px;width:1px;height:33px;background:#c8c8c8;"></div>
<div class="t " style="left:620.00px;top:385.90px;font-size:22px;color:#111111;letter-spacing:-0.221px;">Rule (applied in the order shown)</div>
<div class="t " style="left:1288.00px;top:385.90px;font-size:22px;color:#111111;transform:scaleX(0.9288);transform-origin:0 0;">Actions</div>
<div class="r" style="left:1616px;top:380px;width:34px;height:264px;background:#f0f0f0;"></div>
<svg class="s" style="left:1625px;top:390px;" width="18" height="14" viewBox="0 0 18 14"><path d="M3 11 L9 5 L15 11" fill="none" stroke="#606060" stroke-width="2.2"/></svg>
<svg class="s" style="left:1625px;top:619px;" width="18" height="14" viewBox="0 0 18 14"><path d="M3 4 L9 10 L15 4" fill="none" stroke="#606060" stroke-width="2.2"/></svg>
<div class="r" style="left:1617px;top:576px;width:33px;height:34px;background:#c8c8c8;"></div>
<svg class="s" style="left:582px;top:416px;" width="28" height="28" viewBox="0 0 28 28"><rect x="0.5" y="0.5" width="27" height="27" fill="#fff" stroke="#7a7a7a" stroke-width="1"/><path d="M4.5 14.5 L11 22 L23.5 5.5" fill="none" stroke="#4a79bb" stroke-width="3.6"/></svg>
<div class="t " style="left:620.00px;top:419.75px;font-size:21px;color:#111111;letter-spacing:0.048px;">thongsoi@ncr-rubber.com</div>
<svg class="s" style="left:1355px;top:413px;" width="34" height="32" viewBox="0 0 34 32"><path d="M4 10 H17 L19 5 H31 V29 H4 Z" fill="#eec47c"/><path d="M19 5 H31 V9 H18 Z" fill="#fbf0d6"/>
<path d="M2 7.5 L14 7.5 L8 16.5 Z" fill="#fff" stroke="#fff" stroke-width="2.5"/><path d="M2.5 1.5 Q8.5 3 8.5 9" fill="none" stroke="#3a6fb5" stroke-width="3.8"/><path d="M2 7.5 L8 10 L14 7.5 L8 16.5 Z" fill="#3a6fb5"/></svg>
<svg class="s" style="left:1575px;top:416px;" width="32" height="29" viewBox="0 0 32 29"><rect x="3" y="0" width="3" height="8" fill="#777"/><rect x="1" y="8" width="7" height="19" rx="2.5" fill="#777"/><line x1="1" y1="16" x2="8" y2="16" stroke="#fff" stroke-width="0.8"/>
<path d="M12 1 Q10 7 14 9 V27 Q16 29 18 27 V9 Q22 7 20 1 L18 1 V5 H14 V1 Z" fill="#777"/>
<rect x="18" y="25" width="2.5" height="2.5" fill="#777"/><rect x="22.5" y="25" width="2.5" height="2.5" fill="#777"/><rect x="27" y="25" width="2.5" height="2.5" fill="#777"/></svg>
<svg class="s" style="left:582px;top:449px;" width="28" height="28" viewBox="0 0 28 28"><rect x="0.5" y="0.5" width="27" height="27" fill="#fff" stroke="#7a7a7a" stroke-width="1"/><path d="M4.5 14.5 L11 22 L23.5 5.5" fill="none" stroke="#4a79bb" stroke-width="3.6"/></svg>
<div class="t " style="left:620.00px;top:452.75px;font-size:21px;color:#111111;letter-spacing:0.098px;">Karinthip Chanphipat</div>
<svg class="s" style="left:1355px;top:446px;" width="34" height="32" viewBox="0 0 34 32"><path d="M4 10 H17 L19 5 H31 V29 H4 Z" fill="#eec47c"/><path d="M19 5 H31 V9 H18 Z" fill="#fbf0d6"/>
<path d="M2 7.5 L14 7.5 L8 16.5 Z" fill="#fff" stroke="#fff" stroke-width="2.5"/><path d="M2.5 1.5 Q8.5 3 8.5 9" fill="none" stroke="#3a6fb5" stroke-width="3.8"/><path d="M2 7.5 L8 10 L14 7.5 L8 16.5 Z" fill="#3a6fb5"/></svg>
<svg class="s" style="left:1575px;top:449px;" width="32" height="29" viewBox="0 0 32 29"><rect x="3" y="0" width="3" height="8" fill="#777"/><rect x="1" y="8" width="7" height="19" rx="2.5" fill="#777"/><line x1="1" y1="16" x2="8" y2="16" stroke="#fff" stroke-width="0.8"/>
<path d="M12 1 Q10 7 14 9 V27 Q16 29 18 27 V9 Q22 7 20 1 L18 1 V5 H14 V1 Z" fill="#777"/>
<rect x="18" y="25" width="2.5" height="2.5" fill="#777"/><rect x="22.5" y="25" width="2.5" height="2.5" fill="#777"/><rect x="27" y="25" width="2.5" height="2.5" fill="#777"/></svg>
<svg class="s" style="left:582px;top:482px;" width="28" height="28" viewBox="0 0 28 28"><rect x="0.5" y="0.5" width="27" height="27" fill="#fff" stroke="#7a7a7a" stroke-width="1"/><path d="M4.5 14.5 L11 22 L23.5 5.5" fill="none" stroke="#4a79bb" stroke-width="3.6"/></svg>
<div class="t " style="left:620.00px;top:485.75px;font-size:21px;color:#111111;letter-spacing:-0.217px;">IB_Apinya</div>
<svg class="s" style="left:1355px;top:479px;" width="34" height="32" viewBox="0 0 34 32"><path d="M4 10 H17 L19 5 H31 V29 H4 Z" fill="#eec47c"/><path d="M19 5 H31 V9 H18 Z" fill="#fbf0d6"/>
<path d="M2 7.5 L14 7.5 L8 16.5 Z" fill="#fff" stroke="#fff" stroke-width="2.5"/><path d="M2.5 1.5 Q8.5 3 8.5 9" fill="none" stroke="#3a6fb5" stroke-width="3.8"/><path d="M2 7.5 L8 10 L14 7.5 L8 16.5 Z" fill="#3a6fb5"/></svg>
<svg class="s" style="left:1575px;top:482px;" width="32" height="29" viewBox="0 0 32 29"><rect x="3" y="0" width="3" height="8" fill="#777"/><rect x="1" y="8" width="7" height="19" rx="2.5" fill="#777"/><line x1="1" y1="16" x2="8" y2="16" stroke="#fff" stroke-width="0.8"/>
<path d="M12 1 Q10 7 14 9 V27 Q16 29 18 27 V9 Q22 7 20 1 L18 1 V5 H14 V1 Z" fill="#777"/>
<rect x="18" y="25" width="2.5" height="2.5" fill="#777"/><rect x="22.5" y="25" width="2.5" height="2.5" fill="#777"/><rect x="27" y="25" width="2.5" height="2.5" fill="#777"/></svg>
<svg class="s" style="left:582px;top:515px;" width="28" height="28" viewBox="0 0 28 28"><rect x="0.5" y="0.5" width="27" height="27" fill="#fff" stroke="#7a7a7a" stroke-width="1"/><path d="M4.5 14.5 L11 22 L23.5 5.5" fill="none" stroke="#4a79bb" stroke-width="3.6"/></svg>
<div class="t " style="left:620.00px;top:518.75px;font-size:21px;color:#111111;letter-spacing:-0.022px;">Khemjira Wongsri</div>
<svg class="s" style="left:1355px;top:512px;" width="34" height="32" viewBox="0 0 34 32"><path d="M4 10 H17 L19 5 H31 V29 H4 Z" fill="#eec47c"/><path d="M19 5 H31 V9 H18 Z" fill="#fbf0d6"/>
<path d="M2 7.5 L14 7.5 L8 16.5 Z" fill="#fff" stroke="#fff" stroke-width="2.5"/><path d="M2.5 1.5 Q8.5 3 8.5 9" fill="none" stroke="#3a6fb5" stroke-width="3.8"/><path d="M2 7.5 L8 10 L14 7.5 L8 16.5 Z" fill="#3a6fb5"/></svg>
<svg class="s" style="left:1575px;top:515px;" width="32" height="29" viewBox="0 0 32 29"><rect x="3" y="0" width="3" height="8" fill="#777"/><rect x="1" y="8" width="7" height="19" rx="2.5" fill="#777"/><line x1="1" y1="16" x2="8" y2="16" stroke="#fff" stroke-width="0.8"/>
<path d="M12 1 Q10 7 14 9 V27 Q16 29 18 27 V9 Q22 7 20 1 L18 1 V5 H14 V1 Z" fill="#777"/>
<rect x="18" y="25" width="2.5" height="2.5" fill="#777"/><rect x="22.5" y="25" width="2.5" height="2.5" fill="#777"/><rect x="27" y="25" width="2.5" height="2.5" fill="#777"/></svg>
<svg class="s" style="left:582px;top:548px;" width="28" height="28" viewBox="0 0 28 28"><rect x="0.5" y="0.5" width="27" height="27" fill="#fff" stroke="#7a7a7a" stroke-width="1"/><path d="M4.5 14.5 L11 22 L23.5 5.5" fill="none" stroke="#4a79bb" stroke-width="3.6"/></svg>
<div class="t " style="left:620.00px;top:551.75px;font-size:21px;color:#111111;letter-spacing:0.068px;">Clear categories on mail (recommended)</div>
<svg class="s" style="left:1575px;top:548px;" width="32" height="29" viewBox="0 0 32 29"><rect x="3" y="0" width="3" height="8" fill="#777"/><rect x="1" y="8" width="7" height="19" rx="2.5" fill="#777"/><line x1="1" y1="16" x2="8" y2="16" stroke="#fff" stroke-width="0.8"/>
<path d="M12 1 Q10 7 14 9 V27 Q16 29 18 27 V9 Q22 7 20 1 L18 1 V5 H14 V1 Z" fill="#777"/>
<rect x="18" y="25" width="2.5" height="2.5" fill="#777"/><rect x="22.5" y="25" width="2.5" height="2.5" fill="#777"/><rect x="27" y="25" width="2.5" height="2.5" fill="#777"/></svg>
<div class="r" style="left:578px;top:579px;width:1038px;height:33px;background:#a6cdf0;border:1px dotted #3c5a78;"></div>
<svg class="s" style="left:582px;top:581px;" width="28" height="28" viewBox="0 0 28 28"><rect x="0.5" y="0.5" width="27" height="27" fill="#fff" stroke="#7a7a7a" stroke-width="1"/><path d="M4.5 14.5 L11 22 L23.5 5.5" fill="none" stroke="#4a79bb" stroke-width="3.6"/></svg>
<div class="t " style="left:620.00px;top:584.75px;font-size:21px;color:#111111;letter-spacing:-0.290px;">External</div>
<svg class="s" style="left:1355px;top:578px;" width="34" height="32" viewBox="0 0 34 32"><path d="M4 10 H17 L19 5 H31 V29 H4 Z" fill="#eec47c"/><path d="M19 5 H31 V9 H18 Z" fill="#fbf0d6"/>
<path d="M2 7.5 L14 7.5 L8 16.5 Z" fill="#fff" stroke="#fff" stroke-width="2.5"/><path d="M2.5 1.5 Q8.5 3 8.5 9" fill="none" stroke="#3a6fb5" stroke-width="3.8"/><path d="M2 7.5 L8 10 L14 7.5 L8 16.5 Z" fill="#3a6fb5"/></svg>
<div class="t " style="left:578.00px;top:671.90px;font-size:22px;color:#111111;transform:scaleX(0.9479);transform-origin:0 0;">Rule description (click an underlined value to edit):</div>
<div class="r" style="left:577px;top:703px;width:1074px;height:220px;background:#fff;border:1px solid #a0a0a0;"></div>
<div class="t " style="left:592.00px;top:707.90px;font-size:22px;color:#111111;transform:scaleX(0.9427);transform-origin:0 0;">Apply this rule after the message arrives</div>
<div class="t " style="left:592.00px;top:734.90px;font-size:22px;color:#111111;letter-spacing:-0.159px;">move it to the</div>
<div class="t " style="left:744.00px;top:734.90px;font-size:22px;color:#2f63a4;transform:scaleX(0.9294);transform-origin:0 0;">External</div>
<div class="r" style="left:727px;top:755px;width:92px;height:1px;background:#2f63a4;"></div>
<div class="t " style="left:825.00px;top:734.90px;font-size:22px;color:#111111;letter-spacing:-0.204px;">folder</div>
<div class="t " style="left:592.00px;top:761.90px;font-size:22px;color:#111111;transform:scaleX(0.9542);transform-origin:0 0;">except with</div>
<div class="t " style="left:703.00px;top:761.90px;font-size:22px;color:#2f63a4;transform:scaleX(0.9514);transform-origin:0 0;">@ncr-rubber.com</div>
<div class="r" style="left:703px;top:782px;width:163px;height:1px;background:#2f63a4;"></div>
<div class="t " style="left:872.00px;top:761.90px;font-size:22px;color:#111111;transform:scaleX(0.9304);transform-origin:0 0;">in the sender's address</div>
<div class="r" style="left:577px;top:937px;width:27px;height:27px;background:#fff;border:2px solid #333;"></div>
<div class="t " style="left:609.00px;top:939.90px;font-size:22px;color:#111111;transform:scaleX(0.9193);transform-origin:0 0;">Enable rules on all messages downloaded from RSS Feeds</div>
<div class="r" style="left:1210px;top:1054px;width:148px;height:42px;background:#e1e1e1;border:2px solid #0078d7;"></div>
<div class="t " style="left:1271.00px;top:1065.90px;font-size:22px;color:#111111;transform:scaleX(0.8179);transform-origin:0 0;">OK</div>
<div class="r" style="left:1372px;top:1054px;width:148px;height:42px;background:#e1e1e1;border:1px solid #adadad;"></div>
<div class="t " style="left:1416.00px;top:1065.90px;font-size:22px;color:#111111;transform:scaleX(0.8761);transform-origin:0 0;">Cancel</div>
<div class="r" style="left:1534px;top:1054px;width:148px;height:42px;background:#cccccc;border:1px solid #bfbfbf;"></div>
<div class="t " style="left:1582.00px;top:1065.90px;font-size:22px;color:#9d9d9d;transform:scaleX(0.9269);transform-origin:0 0;">Apply</div>
</body></html>
